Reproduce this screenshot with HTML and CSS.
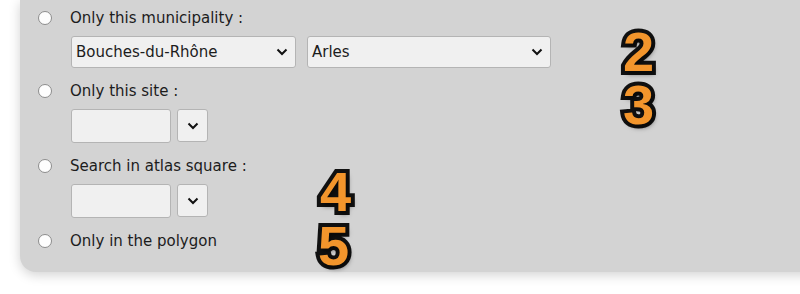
FILE: index.html
```html
<!DOCTYPE html>
<html>
<head>
<meta charset="utf-8">
<link rel="stylesheet" href="styles.css">
</head>
<body>
<div class="panel">
  <div class="opt first"><span class="radio"></span><span class="label">Only this municipality :</span></div>
  <div class="ctrl">
    <div class="select w1"><span>Bouches-du-Rhône</span><svg class="chev" width="12" height="8" viewBox="0 0 12 8"><path d="M1.5 1.5 L6 6 L10.5 1.5" fill="none" stroke="#111" stroke-width="2"/></svg></div>
    <div class="select w2"><span>Arles</span><svg class="chev" width="12" height="8" viewBox="0 0 12 8"><path d="M1.5 1.5 L6 6 L10.5 1.5" fill="none" stroke="#111" stroke-width="2"/></svg></div>
  </div>
  <div class="opt"><span class="radio"></span><span class="label">Only this site :</span></div>
  <div class="ctrl">
    <div class="input"></div>
    <div class="btn"><svg width="12" height="8" viewBox="0 0 12 8"><path d="M1.5 1.5 L6 6 L10.5 1.5" fill="none" stroke="#111" stroke-width="2"/></svg></div>
  </div>
  <div class="opt"><span class="radio"></span><span class="label">Search in atlas square :</span></div>
  <div class="ctrl">
    <div class="input"></div>
    <div class="btn"><svg width="12" height="8" viewBox="0 0 12 8"><path d="M1.5 1.5 L6 6 L10.5 1.5" fill="none" stroke="#111" stroke-width="2"/></svg></div>
  </div>
  <div class="opt"><span class="radio"></span><span class="label">Only in the polygon</span></div>

  <span class="num n2">2</span>
  <span class="num n3">3</span>
  <span class="num n4">4</span>
  <span class="num n5">5</span>
</div>
</body>
</html>
```
FILE: styles.css
```css
html, body {
  margin: 0;
  padding: 0;
  background: #ffffff;
  overflow: hidden;
}
body {
  width: 800px;
  height: 294px;
  font-family: "DejaVu Sans", Verdana, sans-serif;
  color: #1c1c1c;
}
.panel {
  position: relative;
  margin-left: 20px;
  width: 820px;
  background: #d3d3d3;
  border-bottom-left-radius: 16px;
  box-shadow: 0 3px 12px rgba(0, 0, 0, 0.18);
  padding: 6px 0 19px 18px;
  box-sizing: border-box;
}
.opt {
  display: flex;
  align-items: center;
  height: 24px;
  margin-top: 11px;
}
.opt.first {
  margin-top: 0;
}
.radio {
  width: 12px;
  height: 12px;
  border: 1px solid #8c8c8c;
  border-radius: 50%;
  background: #fdfdfd;
  margin-right: 18px;
  flex: none;
}
.label {
  font-size: 15px;
  line-height: 24px;
}
.ctrl {
  display: flex;
  gap: 11px;
  margin-top: 6px;
  margin-left: 33px;
}
.select {
  display: flex;
  align-items: center;
  justify-content: space-between;
  height: 32px;
  box-sizing: border-box;
  background: #f0f0f0;
  border: 1px solid #b4b4b4;
  border-radius: 3px;
  padding: 0 7px 0 4px;
  font-size: 15px;
}
.w1 { width: 225px; }
.w2 { width: 244px; }
.chev { display: block; }
.input {
  width: 100px;
  height: 34px;
  box-sizing: border-box;
  background: #f0f0f0;
  border: 1px solid #b4b4b4;
  border-radius: 3px;
}
.ctrl .btn {
  width: 31px;
  height: 33px;
  box-sizing: border-box;
  background: #f0f0f0;
  border: 1px solid #b4b4b4;
  border-radius: 3px;
  display: flex;
  align-items: center;
  justify-content: center;
  margin-left: -5px;
}
.num {
  position: absolute;
  font-family: "Liberation Sans", Arial, sans-serif;
  font-weight: bold;
  font-size: 56px;
  line-height: 0.8;
  color: #f2952c;
  -webkit-text-stroke: 8px #111;
  paint-order: stroke fill;
  text-shadow: 2px 3px 5px rgba(0, 0, 0, 0.55);
}
.n2 { left: 603px; top: 30px; }
.n3 { left: 603px; top: 83px; }
.n4 { left: 300px; top: 170px; }
.n5 { left: 298px; top: 224px; }
```
